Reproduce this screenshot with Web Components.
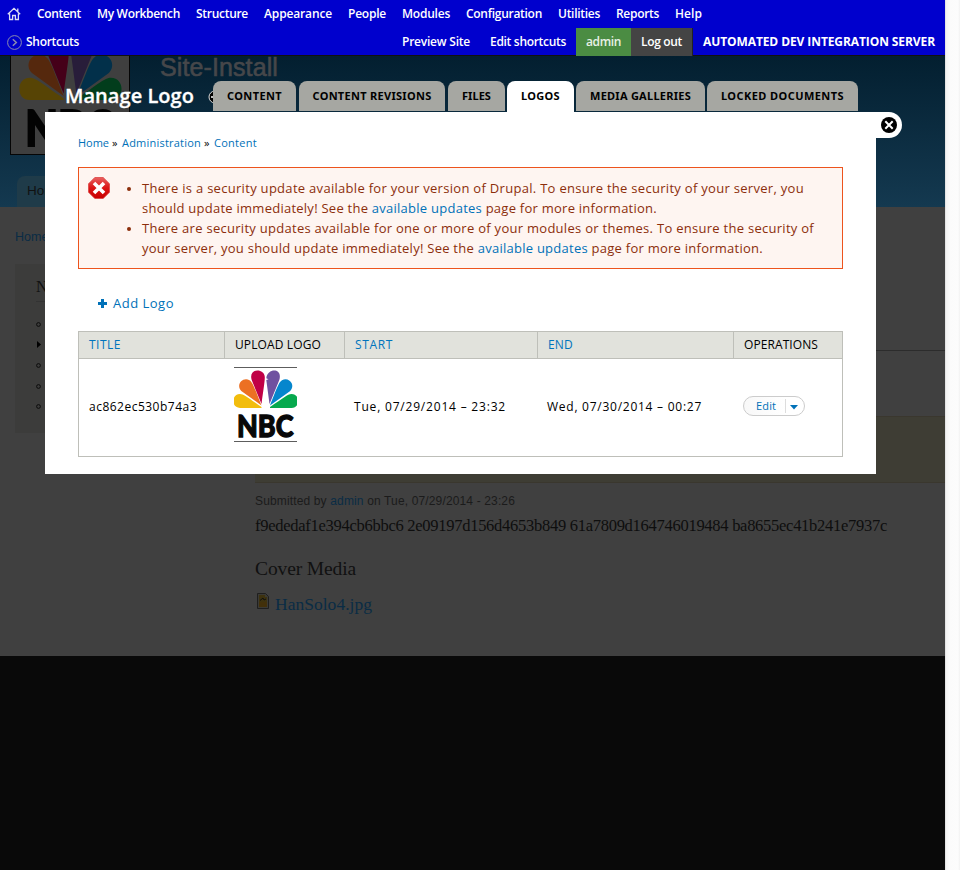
<!DOCTYPE html>
<html lang="en">
<head>
<meta charset="utf-8">
<title>Manage Logo</title>
<style>
html,body{margin:0;height:870px;overflow:hidden}
body{background:#fafafa;font-family:"Open Sans","Noto Sans",sans-serif}
</style>
</head>
<body>
<admin-page></admin-page>

<template id="t-page">
<style>
:host{display:block;position:relative;width:960px;height:870px;overflow:hidden}
site-backdrop{width:945px}
.edge{position:absolute;right:0;top:0;width:14px;height:870px;border-left:1px solid #e4e4e4;background:linear-gradient(90deg,#f3f3f3,#fbfbfb 4px,#fcfcfc 12px,#f2f2f2)}
admin-toolbar{position:absolute;left:0;top:0;width:945px}
overlay-dialog{position:absolute;left:45px;top:81px}
</style>
<site-backdrop></site-backdrop>
<div class="edge"></div>
<overlay-dialog>
  <error-message slot="message"></error-message>
  <logo-table slot="table"></logo-table>
</overlay-dialog>
<admin-toolbar></admin-toolbar>
</template>

<template id="t-toolbar">
<style>
:host{display:block;background:#0000cd;border-bottom:1px solid #111;height:55px;color:#fff;font:600 12px/28px "Open Sans",sans-serif;box-sizing:content-box}
.row{display:flex;height:28px}
.menu{padding-left:7px}
.menu svg{margin:7px 16px 0 0;flex:none}
.menu fit-text{margin-right:16px}
.short{padding-left:7px;height:28px}
.short svg{margin:7px 4px 0 0;flex:none}
.right{margin-left:auto;display:flex}
.right fit-text{display:block}
.prev{margin-right:20px}.edit{margin-right:10px}
.user{background:#4b8c43;padding:0 10px;color:#e8f1e6}
.out{background:#444;padding:0 10px 0 10px;border-right:1px solid #222}
.srv{font-weight:700;margin:0 10px}
</style>
<div class="row menu">
<svg width="14" height="14" viewBox="0 0 14 14" fill="none" stroke="#dcdcf4" stroke-width="1.3"><path d="M.8 7.2 7 1.3l6.200 5.900M2.600 6.500v6h3v-4h2.800v4h3v-6M10.800 1.500v3"/></svg>
<fit-text w="44">Content</fit-text><fit-text w="83">My Workbench</fit-text><fit-text w="52">Structure</fit-text><fit-text w="68">Appearance</fit-text><fit-text w="38">People</fit-text><fit-text w="48">Modules</fit-text><fit-text w="76">Configuration</fit-text><fit-text w="42">Utilities</fit-text><fit-text w="43">Reports</fit-text><fit-text w="27">Help</fit-text>
</div>
<div class="row short">
<svg width="15" height="15" viewBox="0 0 15 15" fill="none" stroke="#8b8baf"><circle cx="7.500" cy="7.500" r="6.900"/><path stroke-width="1.500" d="m5.800 4.300 3.500 3.200-3.500 3.200"/></svg>
<fit-text w="53">Shortcuts</fit-text>
<div class="right"><div class="prev"><fit-text w="68">Preview Site</fit-text></div><div class="edit"><fit-text w="76">Edit shortcuts</fit-text></div><div class="user"><fit-text w="35">admin</fit-text></div><div class="out"><fit-text w="41">Log out</fit-text></div><div class="srv"><fit-text w="232">AUTOMATED DEV INTEGRATION SERVER</fit-text></div></div>
</div>
</template>

<template id="t-logo">
<style>:host{display:block}svg{display:block;width:100%;height:100%}</style>
<svg preserveAspectRatio="none">
<path fill="#f2bd0d" d="M33.500 41H12C3 41 3 27 12 27c4 0 8 4 21.500 13z"/>
<path fill="#ec7023" d="M33.500 38.500 13.300 24C7.500 18 14.500 9.500 21.500 13.200c3 2 4.500 6 12 25.300z"/>
<path fill="#c00046" d="M33.500 37 23.700 13C20 .8 36.500.8 36.800 10c0 5-1.300 12-3.300 27z"/>
<path fill="#6f51a0" d="M41.500 37 38.300 13l2.200-.8-2.200-1C39.500.8 55 .8 51.300 13z"/>
<path fill="#0586cd" d="M42 38.500 62.200 24C68 18 61 9.500 54 13.200c-3 2-4.500 6-12 25.300z"/>
<path fill="#06a94e" d="M42 41h21.500c9 0 9-14 0-14-4 0-8 4-21.500 13z"/>
<text x="9" y="70.200" font-family="Lato" font-weight="900" font-size="31" textLength="56.500" lengthAdjust="spacingAndGlyphs" fill="#080808" stroke="#080808" stroke-width="1.300">NBC</text>
</svg>
</template>

<template id="t-backdrop">
<style>
:host{display:block;height:870px;background:#090909;font-family:"Liberation Sans",sans-serif}
.site{height:656px;background:#404040;overflow:hidden}
header{height:207px;background:linear-gradient(#031f30 56px,#143950);display:flex;flex-direction:column;box-sizing:border-box;padding:34px 0 0 10px}
.brand{display:flex;height:142px}
.brand div{width:118px;height:119px;border:1px solid #050505;background:#3f3f3f}
nbc-logo{filter:brightness(.36)}
h1{margin:19px 0 0 30px;font:400 25px/28px "Liberation Sans";color:#46474a;-webkit-text-stroke:.6px #46474a}
.tab{margin-left:7px;width:60px;height:31px;border-radius:8px 8px 0 0;background:#1f3b49;color:#111;font-size:13.500px;line-height:30px;padding-left:10px}
.bc{padding:21px 15px 18px;font-size:12.500px;line-height:18px;color:#0a2c45}
.cols{display:flex}
aside{margin-left:15px;width:209px;height:169px;background:#3c3c3b;padding:0 0 0 21px;box-sizing:border-box;color:#111}
h2{margin:0 0 12px;font:16px/18px "Liberation Serif";padding:14px 0 5px;border-bottom:1px solid #333}
ul{list-style:none;margin:0;padding:0}
li{height:20.600px;display:flex;align-items:center}
li svg{display:block}
main{margin-left:31px;width:690px;padding-top:86px;height:306px;box-sizing:border-box}
.rule{border-top:1px solid #2c2c2c;height:65px}
.note{height:65px;background:#3e3d34;border:solid #3a372e;border-width:1px 0}
.sub{margin-top:10px;font-size:12px;line-height:17px;color:#1b1b1b}
.sub b{font-weight:400;color:#0a2c45}
.hash{margin-top:5px;font:16.500px/22px "Liberation Serif";color:#0e0e0e}
h3{margin:20px 0 0;font:19.500px/24px "Liberation Serif";color:#111}
.file{display:flex;margin-top:12px;font:17.500px/22px "Liberation Serif";color:#0a2c45}
.file svg{margin:0 5px 0 1px}
</style>
<div class="site">
<header><div class="brand"><div><nbc-logo view="0 0 75 75" style="width:118px;height:119px"></nbc-logo></div><h1><fit-text w="118">Site-Install</fit-text></h1></div><div class="tab">Home</div></header>
<div class="bc">Home</div>
<div class="cols">
<aside><h2>Navigation</h2><ul id="list"></ul></aside>
<main><div class="rule"></div><div class="note"></div>
<div class="sub"><fit-text w="260">Submitted by <b>admin</b> on Tue, 07/29/2014 - 23:26</fit-text></div>
<div class="hash"><fit-text w="632">f9ededaf1e394cb6bbc6 2e09197d156d4653b849 61a7809d164746019484 ba8655ec41b241e7937c</fit-text></div>
<h3><fit-text w="101">Cover Media</fit-text></h3>
<div class="file"><svg width="14" height="17" viewBox="0 0 14 17"><path d="M1.500.5h8l3 3v12h-11z" fill="#3b3a35" stroke="#1f1f1f"/><path d="M3 2h6v2h2v10H3z" fill="#3d320f"/><path d="M3 9h8v5H3z" fill="#42300a"/><path d="M4 7.500 7 5l1 2 2-1" stroke="#111" fill="none"/></svg><fit-text w="97">HanSolo4.jpg</fit-text></div>
</main></div></div>
</template>

<template id="t-dialog">
<style>
:host{display:block;width:857px;color:#000}
.head{display:flex;height:31px;align-items:flex-start}
h1{margin:0 14px 0 20px;font:600 20px/29px "Open Sans";color:#fff;flex:none;-webkit-text-stroke:.3px #fff}
.gear{width:5px;height:14px;margin-top:9px;overflow:hidden;flex:none}
.gear svg{display:block}
nav{display:flex;font:700 11px/30px "Noto Sans","Open Sans";text-align:center}
nav div{background:#a6a7a2;border-radius:8px 8px 0 0;height:30px;display:flex;justify-content:center}
nav .on{background:#fff;height:31px}
.body{display:flex;align-items:flex-start}
.panel{width:831px;height:362px;background:#fff;box-sizing:border-box;padding:22px 33px 0}
.close{width:26px;height:26px;background:#fff;border-radius:0 13px 13px 0}
.close svg{display:block;margin:5px 0 0 5px}
.bc{font-size:11px;line-height:18px;color:#0071b8;display:flex;gap:3px;height:33px}
.bc i{font-style:normal;color:#000}
.add{display:flex;align-items:center;gap:6px;color:#0071b8;font-size:13px;line-height:20px;margin:24px 0 18px 20px}
</style>
<div class="head"><h1><fit-text w="129">Manage Logo</fit-text></h1><div class="gear"><svg width="14" height="14" viewBox="0 0 14 14"><circle cx="7" cy="7" r="6" fill="#000" stroke="#ddd"/><path d="M3 7h7" stroke="#fff" stroke-width="1.500"/></svg></div>
<nav><div style="width:83px"><fit-text w="55">CONTENT</fit-text></div><div style="width:146px;margin-left:3px"><fit-text w="119">CONTENT REVISIONS</fit-text></div><div style="width:57px;margin-left:3px"><fit-text w="29">FILES</fit-text></div><div class="on" style="width:67px;margin-left:2px"><fit-text w="39">LOGOS</fit-text></div><div style="width:129px;margin-left:2px"><fit-text w="101">MEDIA GALLERIES</fit-text></div><div style="width:151px;margin-left:2px"><fit-text w="123">LOCKED DOCUMENTS</fit-text></div></nav></div>
<div class="body"><div class="panel">
<div class="bc"><fit-text w="31">Home</fit-text><i><fit-text w="7">»</fit-text></i><fit-text w="79">Administration</fit-text><i><fit-text w="7">»</fit-text></i><fit-text w="43">Content</fit-text></div>
<slot name="message"></slot>
<div class="add"><svg width="9" height="9"><path d="M3 0h3v3h3v3H6v3H3V6H0V3h3z" fill="#0071b8"/></svg><fit-text w="61">Add Logo</fit-text></div>
<slot name="table"></slot>
</div><div class="close"><svg width="16" height="16" viewBox="0 0 16 16"><circle cx="8" cy="8" r="8"/><path d="m4.300 4.300 7.400 7.400m0-7.400-7.400 7.400" stroke="#fff" stroke-width="2"/></svg></div></div>
</template>

<template id="t-error">
<style>
:host{display:flex;box-sizing:border-box;width:765px;height:102px;border:1px solid #ed541d;background:#fef5f1;color:#8c2e0b;font-size:13px;line-height:20px;padding:10px 0 0 9px}
svg{flex:none;margin-top:-1px}
ul{margin:0 0 0 17px;padding:0;list-style:none}
li{display:flex}
li::before{content:"";width:4px;height:4px;border-radius:50%;background:#8c2e0b;margin:9px 11px 0 0}
li div{display:flex;flex-direction:column}
b{font-weight:400;color:#0071b8}
</style>
<svg width="22" height="22" viewBox="0 0 22 22"><defs><linearGradient id="g" x2="0" y2="1"><stop stop-color="#e86060"/><stop offset=".5" stop-color="#db1414"/><stop offset="1" stop-color="#c80000"/></linearGradient></defs><path d="M6.800.5h8.400l6.300 6.300v8.400l-6.300 6.300H6.800L.5 15.200V6.800z" fill="url(#g)" stroke="#d44" stroke-width=".8"/><path d="m6 6 10 10m0-10L6 16" stroke="#fff" stroke-width="3.600"/></svg>
<ul><li><div><fit-text w="662">There is a security update available for your version of Drupal. To ensure the security of your server, you</fit-text><fit-text w="515">should update immediately! See the <b>available updates</b> page for more information.</fit-text></div></li>
<li><div><fit-text w="672">There are security updates available for one or more of your modules or themes. To ensure the security of</fit-text><fit-text w="621">your server, you should update immediately! See the <b>available updates</b> page for more information.</fit-text></div></li></ul>
</template>

<template id="t-table">
<style>
:host{display:grid;grid-template-columns:145px 119px 192px 195px 108px;grid-template-rows:26px 97px;gap:1px;width:763px;border:1px solid #bebfb9;font-size:12px;background:#fff}
.h{background:#e1e2dc;line-height:26px;padding-left:10px;box-shadow:1px 0 #bebfb9,0 1px #bebfb9,1px 1px #bebfb9}
.h.last{box-shadow:0 1px #bebfb9}
.l{color:#0074bd}
.c{line-height:96px;padding-left:10px}
.c.n{padding-left:9px}
.img{padding:8px 0 0 9px}
nbc-logo{width:63px;height:73px;border:solid #5d5d5d;border-width:1px 0}
.op{padding:37px 0 0 9px}
</style>
<div class="h l"><fit-text w="32">TITLE</fit-text></div><div class="h"><fit-text w="86">UPLOAD LOGO</fit-text></div><div class="h l"><fit-text w="38">START</fit-text></div><div class="h l"><fit-text w="25">END</fit-text></div><div class="h last"><fit-text w="74">OPERATIONS</fit-text></div>
<div class="c"><fit-text w="108">ac862ec530b74a3</fit-text></div><div class="img"><nbc-logo view="6 1 63 73"></nbc-logo></div><div class="c n"><fit-text w="152">Tue, 07/29/2014 – 23:32</fit-text></div><div class="c n"><fit-text w="155">Wed, 07/30/2014 – 00:27</fit-text></div><div class="op"><drop-button>Edit</drop-button></div>
</template>

<template id="t-drop">
<style>
:host{display:flex;box-sizing:border-box;width:62px;height:20px;border:1px solid #ccc;border-radius:10px;background:linear-gradient(90deg,#f8f8f8,#fff 70%);color:#0071b8;font-size:11px;line-height:18px;align-items:center}
span{width:42px;padding-left:12px;box-sizing:border-box;border-right:1px solid #ddd;height:14px;line-height:14px;letter-spacing:.15px}
svg{margin:2px 0 0 4px}
</style>
<span><slot></slot></span><svg width="8" height="5"><path d="M0 0h8L4 4.500z" fill="#0071b8"/></svg>
</template>

<script>
const tpl = id => document.getElementById(id).content.cloneNode(true);
function register(name, id, setup) {
  customElements.define(name, class extends HTMLElement {
    constructor() {
      super();
      this.attachShadow({mode: 'open'}).append(tpl(id));
    }
    connectedCallback() { if (setup) setup(this); }
  });
}
register('admin-page', 't-page');
register('site-backdrop', 't-backdrop', el => {
  const circle = '<svg width="5" height="5"><circle cx="2.5" cy="2.5" r="1.9" fill="none" stroke="#0c0c0c"/></svg>';
  const arrow = '<svg width="5" height="7"><path d="M1 0l4 3.500-4 3.500z"/></svg>';
  el.shadowRoot.getElementById('list').innerHTML =
    [circle, arrow, circle, circle, circle].map(s => '<li>' + s + '</li>').join('');
});
register('overlay-dialog', 't-dialog');
register('admin-toolbar', 't-toolbar');
register('error-message', 't-error');
register('logo-table', 't-table');
register('drop-button', 't-drop');
register('nbc-logo', 't-logo', el =>
  el.shadowRoot.querySelector('svg').setAttribute('viewBox', el.getAttribute('view')));

// One line of text, tracked so that it fills the width given in "w".
customElements.define('fit-text', class extends HTMLElement {
  constructor() {
    super();
    this.attachShadow({mode: 'open'}).innerHTML =
      '<style>:host{display:block;flex:none;white-space:nowrap}span{display:inline-block}</style><span><slot></slot></span>';
  }
  connectedCallback() {
    const w = +this.getAttribute('w'), span = this.shadowRoot.querySelector('span');
    const n = this.textContent.length;
    span.style.letterSpacing = (w - span.getBoundingClientRect().width) / n + 'px';
    this.style.width = w + 'px';
  }
});
</script>
</body>
</html>
